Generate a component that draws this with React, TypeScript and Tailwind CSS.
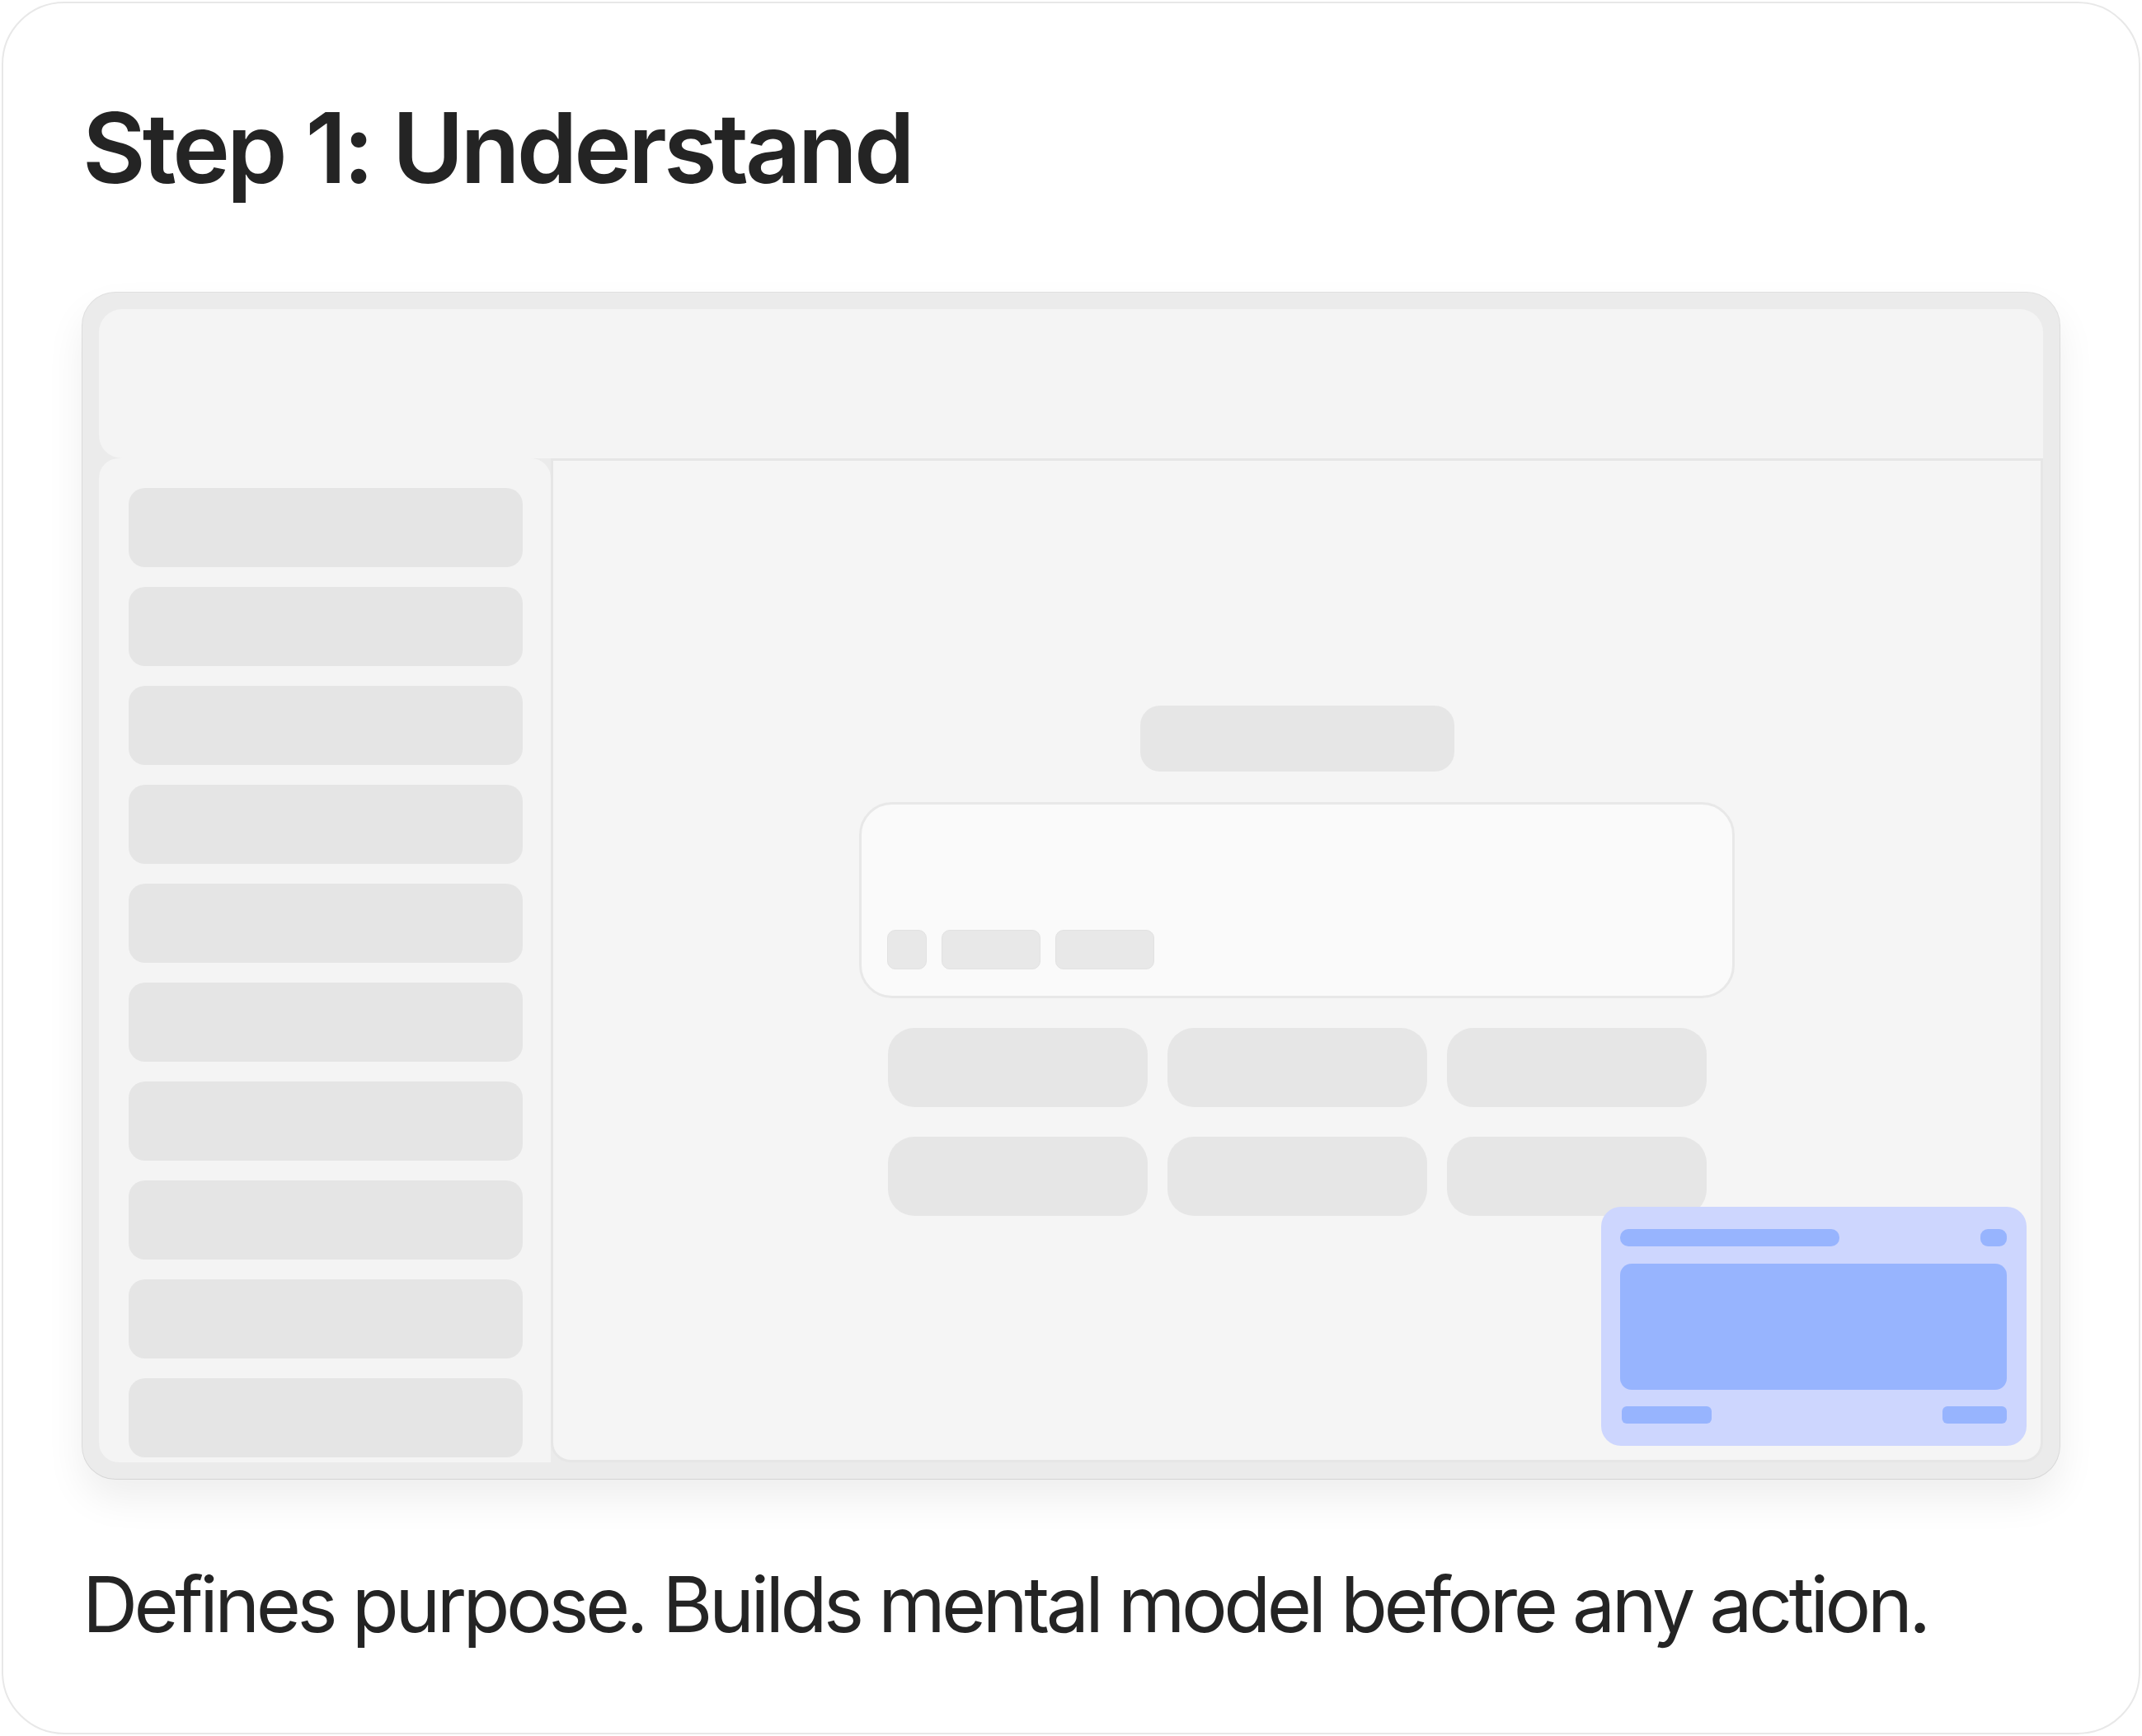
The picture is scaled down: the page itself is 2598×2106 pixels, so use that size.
export default function App() {
  const sideItems = Array.from({ length: 10 });
  const cards = Array.from({ length: 6 });

  return (
    <div className="h-[2106px] w-[2598px] bg-white p-[2px]">
      <div className="flex h-full flex-col rounded-[76px] border-2 border-[#e8e8e8] bg-white px-[96px] pt-[116px] font-['Inter',sans-serif] text-[#242424]">
        <h1 className="text-[118px] font-semibold leading-none tracking-[-4px] whitespace-nowrap">Step 1: Understand</h1>

        {/* app mockup */}
        <div className="mt-[117px] flex h-[1439px] flex-col rounded-[40px] bg-[#ebebeb] p-[20px] shadow-[0_24px_48px_rgba(0,0,0,0.07),0_0_0_1px_#e2e2e2]">
          <div className="h-[181px] rounded-t-[28px] rounded-bl-[28px] bg-[#f4f4f4]" />

          <div className="flex h-[1218px]">
            <div className="flex w-[548px] flex-col gap-[24px] rounded-t-[24px] rounded-bl-[24px] bg-[#f4f4f4] pt-[36px] pr-[34px] pl-[36px]">
              {sideItems.map((_, i) => (
                <div key={i} className="h-[96px] rounded-[20px] bg-[#e5e5e5]" />
              ))}
            </div>

            <div className="relative flex flex-1 items-center justify-center rounded-b-[24px] border-[3px] border-[#e6e6e6] bg-[#f5f5f5]">
              <div className="flex w-[1062px] flex-col items-center">
                <div className="h-[80px] w-[381px] rounded-[24px] bg-[#e6e6e6]" />

                <div className="mt-[37px] flex h-[238px] w-full items-end gap-[18px] rounded-[40px] border-[3px] border-[#e8e8e8] bg-[#fafafa] px-[31px] pb-[32px]">
                  <div className="h-[48px] w-[48px] rounded-[10px] border border-[#e2e2e2] bg-[#e8e8e8]" />
                  <div className="h-[48px] w-[120px] rounded-[10px] border border-[#e2e2e2] bg-[#e8e8e8]" />
                  <div className="h-[48px] w-[120px] rounded-[10px] border border-[#e2e2e2] bg-[#e8e8e8]" />
                </div>

                <div className="mt-[36px] grid w-[993px] grid-cols-3 gap-x-[24px] gap-y-[36px]">
                  {cards.map((_, i) => (
                    <div key={i} className="h-[96px] rounded-[32px] bg-[#e6e6e6]" />
                  ))}
                </div>
              </div>

              {/* floating assistant panel */}
              <div className="absolute right-[17px] bottom-[17px] flex h-[290px] w-[516px] flex-col rounded-[24px] bg-[#cdd6fe] pt-[27px] pr-[24px] pl-[23px]">
                <div className="flex items-center justify-between">
                  <div className="h-[21px] w-[266px] rounded-[10px] bg-[#97b4fe]" />
                  <div className="h-[21px] w-[32px] rounded-[9px] bg-[#97b4fe]" />
                </div>
                <div className="mt-[21px] h-[153px] rounded-[14px] bg-[#97b4fe]" />
                <div className="mt-[20px] flex items-center justify-between">
                  <div className="ml-[2px] h-[21px] w-[109px] rounded-[6px] bg-[#97b4fe]" />
                  <div className="h-[21px] w-[78px] rounded-[6px] bg-[#97b4fe]" />
                </div>
              </div>
            </div>
          </div>
        </div>

        <p className="mt-[106px] text-[93px] leading-none tracking-[-4.5px] whitespace-nowrap">
          Defines purpose. Builds mental model before any action.
        </p>
      </div>
    </div>
  );
}
